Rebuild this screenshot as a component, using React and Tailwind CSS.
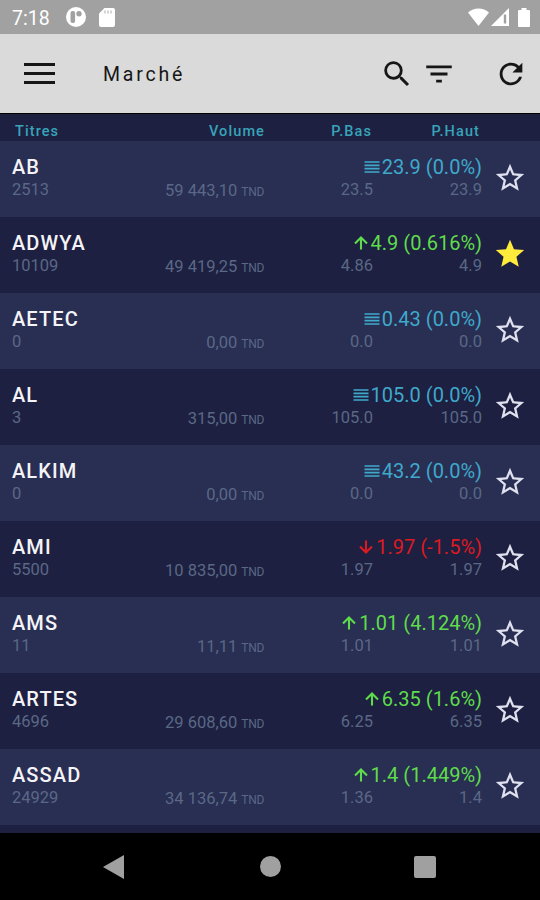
import React, { useState } from "react";
import clsx from "clsx";
import {
  MdFilterList,
  MdRefresh,
  MdReorder,
  MdSearch,
  MdStar,
  MdStarBorder,
} from "react-icons/md";

const STOCKS = [
  { name: "AB", qty: "2513", volume: "59 443,10", price: "23.9 (0.0%)", trend: "flat", low: "23.5", high: "23.9" },
  { name: "ADWYA", qty: "10109", volume: "49 419,25", price: "4.9 (0.616%)", trend: "up", low: "4.86", high: "4.9" },
  { name: "AETEC", qty: "0", volume: "0,00", price: "0.43 (0.0%)", trend: "flat", low: "0.0", high: "0.0" },
  { name: "AL", qty: "3", volume: "315,00", price: "105.0 (0.0%)", trend: "flat", low: "105.0", high: "105.0" },
  { name: "ALKIM", qty: "0", volume: "0,00", price: "43.2 (0.0%)", trend: "flat", low: "0.0", high: "0.0" },
  { name: "AMI", qty: "5500", volume: "10 835,00", price: "1.97 (-1.5%)", trend: "down", low: "1.97", high: "1.97" },
  { name: "AMS", qty: "11", volume: "11,11", price: "1.01 (4.124%)", trend: "up", low: "1.01", high: "1.01" },
  { name: "ARTES", qty: "4696", volume: "29 608,60", price: "6.35 (1.6%)", trend: "up", low: "6.25", high: "6.35" },
  { name: "ASSAD", qty: "24929", volume: "34 136,74", price: "1.4 (1.449%)", trend: "up", low: "1.36", high: "1.4" },
];

const ArrowUp = () => (
  <svg className="mr-[2px] w-4 h-5" viewBox="0 0 16 20" fill="none" stroke="currentColor" strokeWidth="2.1">
    <path d="M8 16.5V5M2 10.6l6-6 6 6" />
  </svg>
);

const ArrowDown = () => (
  <svg className="mr-[2px] w-4 h-5" viewBox="0 0 16 20" fill="none" stroke="currentColor" strokeWidth="2.1">
    <path d="M8 3.5V15M2 9.4l6 6 6-6" />
  </svg>
);

const Bars = () => <MdReorder size={20} />;

const TRENDS = {
  flat: { Icon: Bars, color: "text-[#3fa9cb]" },
  up: { Icon: ArrowUp, color: "text-[#5fdc4c]" },
  down: { Icon: ArrowDown, color: "text-[#dc1a22]" },
};

const StatusBar = () => (
  <div className="h-[34px] shrink-0 bg-[#a1a1a1] flex items-center justify-between pl-3 pr-[10px] text-white">
    <div className="flex items-center">
      <span className="w-[54px] text-[19.5px] leading-[34px] font-normal pt-[3px]">7:18</span>
      <svg className="w-5 h-5" viewBox="0 0 20 20">
        <circle cx="10" cy="10" r="10" fill="#fff" />
        <rect x="4.5" y="4" width="4.6" height="12" rx="2" fill="#a1a1a1" />
        <circle cx="13" cy="6.8" r="2.7" fill="#a1a1a1" />
      </svg>
      <svg className="ml-[13px] w-4 h-[19px]" viewBox="0 0 16 19">
        <path d="M5.5 0H14a2 2 0 0 1 2 2v15a2 2 0 0 1-2 2H2a2 2 0 0 1-2-2V5.5z" fill="#fff" />
        <path d="M6 2.5v3M9 2.5v3M12 2.5v3" stroke="#c4c4c4" strokeWidth="1.4" />
      </svg>
    </div>
    <div className="flex items-center">
      <svg className="w-[21px] h-[18px]" viewBox="0 0 21 18">
        <path d="M0 4.5C6-1 15-1 21 4.5L10.5 18z" fill="#fff" />
      </svg>
      <svg className="ml-[2px] w-[18px] h-[18px]" viewBox="0 0 18 18">
        <path d="M18 0v18H0z" fill="#fff" />
        <path d="M14 6.5v9" stroke="#a1a1a1" strokeWidth="2.4" />
      </svg>
      <svg className="ml-[9px] w-3 h-[19px]" viewBox="0 0 12 19">
        <path d="M3.5 0h5v2H11a1 1 0 0 1 1 1v15a1 1 0 0 1-1 1H1a1 1 0 0 1-1-1V3a1 1 0 0 1 1-1h2.5z" fill="#fff" />
      </svg>
    </div>
  </div>
);

const AppBar = () => (
  <header className="h-[79px] shrink-0 bg-[#dadada] flex items-center pl-6 pr-3 text-[#161616]">
    <button className="w-[31px] h-[21px] flex flex-col justify-between">
      <span className="h-[3px] w-full bg-[#161616]" />
      <span className="h-[3px] w-full bg-[#161616]" />
      <span className="h-[3px] w-full bg-[#161616]" />
    </button>
    <h1 className="ml-12 pt-[3px] text-[19.5px] leading-6 tracking-[2.8px]">Marché</h1>
    <div className="ml-auto flex items-center">
      <button>
        <MdSearch size={34} />
      </button>
      <button className="ml-2">
        <MdFilterList size={34} />
      </button>
      <button className="ml-[38px]">
        <MdRefresh size={34} />
      </button>
    </div>
  </header>
);

const TableHeader = () => (
  <div className="h-7 shrink-0 flex items-center border-t border-black pt-[8px] pl-[15px] text-[14.5px] leading-5 font-medium tracking-[1.1px] text-[#38a3b9]">
    <span className="w-[110px]">Titres</span>
    <span className="w-[140px] text-right">Volume</span>
    <span className="w-[107px] text-right">P.Bas</span>
    <span className="w-[108px] text-right">P.Haut</span>
  </div>
);

const StockRow = ({ stock, starred, onToggleStar }) => {
  const { Icon, color } = TRENDS[stock.trend];

  return (
    <div className="h-[76px] shrink-0 flex pl-3 pt-[14px] odd:bg-[#292e53] even:bg-[#1d2040]">
      <div className="w-[130px]">
        <p className="text-[20px] leading-6 font-medium tracking-[1.1px] text-[#f4f4f8]">{stock.name}</p>
        <p className="pt-px text-[16.5px] leading-5 text-[#5a6886]">{stock.qty}</p>
      </div>
      <p className="w-[122px] pt-[26px] text-right text-[16.5px] leading-5 text-[#5a6886]">
        {stock.volume}
        <span className="ml-[4px] text-[12px] tracking-[-0.3px]">TND</span>
      </p>
      <div className="w-[218px]">
        <div className={clsx("flex items-center justify-end text-[20px] leading-6", color)}>
          <Icon />
          <span>{stock.price}</span>
        </div>
        <div className="flex justify-end pt-px text-[16.5px] leading-5 text-[#5a6886]">
          <span>{stock.low}</span>
          <span className="w-[109px] text-right">{stock.high}</span>
        </div>
      </div>
      <button onClick={onToggleStar} className="ml-[11px] mt-[6px] h-[34px]">
        {starred ? (
          <MdStar size={34} className="text-[#ffeb3b]" />
        ) : (
          <MdStarBorder size={34} className="text-[#dfe1ee]" />
        )}
      </button>
    </div>
  );
};

const NavigationBar = () => (
  <nav className="h-[67px] shrink-0 bg-black flex items-center pl-[103px]">
    <svg className="w-[21px] h-6" viewBox="0 0 21 24">
      <path d="M21 0v24L0 12z" fill="#a0a0a0" />
    </svg>
    <span className="ml-[136px] w-[21px] h-[21px] rounded-full bg-[#a0a0a0]" />
    <span className="ml-[133px] w-[22px] h-[22px] rounded-[2px] bg-[#a0a0a0]" />
  </nav>
);

const App = () => {
  const [favorites, setFavorites] = useState(["ADWYA"]);

  const handleToggleStar = (name) => {
    setFavorites((prev) =>
      prev.includes(name) ? prev.filter((n) => n !== name) : [...prev, name]
    );
  };

  return (
    <div className="w-[540px] h-[900px] overflow-hidden flex flex-col bg-[#1d2040] font-['Roboto',sans-serif]">
      <StatusBar />
      <AppBar />
      <TableHeader />
      <main className="flex-1 min-h-0 overflow-hidden flex flex-col">
        {STOCKS.map((stock) => (
          <StockRow
            key={stock.name}
            stock={stock}
            starred={favorites.includes(stock.name)}
            onToggleStar={() => handleToggleStar(stock.name)}
          />
        ))}
      </main>
      <NavigationBar />
    </div>
  );
};

export default App;
